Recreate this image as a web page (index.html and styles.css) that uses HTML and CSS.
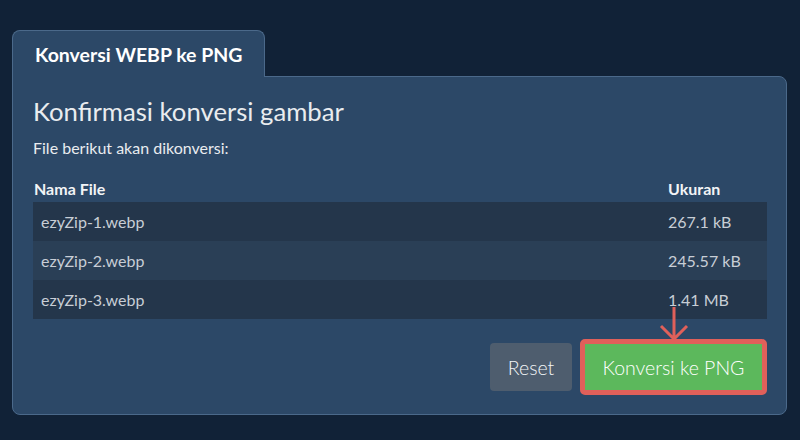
FILE: index.html
```html
<!DOCTYPE html>
<html lang="id">
<head>
<meta charset="utf-8">
<title>Konversi WEBP ke PNG</title>
<link rel="stylesheet" href="styles.css">
</head>
<body>
<div class="page">
  <div class="tabs">
    <div class="tab">Konversi WEBP ke PNG</div>
  </div>
  <div class="panel">
    <h1 class="title">Konfirmasi konversi gambar</h1>
    <p class="lead">File berikut akan dikonversi:</p>
    <div class="table">
      <div class="row head">
        <div class="cell name">Nama File</div>
        <div class="cell size">Ukuran</div>
      </div>
      <div class="row odd">
        <div class="cell name">ezyZip-1.webp</div>
        <div class="cell size">267.1 kB</div>
      </div>
      <div class="row even">
        <div class="cell name">ezyZip-2.webp</div>
        <div class="cell size">245.57 kB</div>
      </div>
      <div class="row odd">
        <div class="cell name">ezyZip-3.webp</div>
        <div class="cell size">1.41 MB</div>
      </div>
    </div>
    <div class="actions">
      <button class="btn reset">Reset</button>
      <div class="highlight">
        <svg class="arrow" width="30" height="34" viewBox="0 0 30 34" aria-hidden="true">
          <path d="M15 0 V32 M2 19 L15 32 L28 19" fill="none" stroke="#e0605a" stroke-width="3" stroke-linecap="butt" stroke-linejoin="miter"/>
        </svg>
        <button class="btn convert">Konversi ke PNG</button>
      </div>
    </div>
  </div>
</div>
</body>
</html>
```

FILE: styles.css
```css
* { box-sizing: border-box; }

html, body {
  margin: 0;
  padding: 0;
  background: #112237;
  width: 800px;
  height: 440px;
  overflow: hidden;
  font-family: Lato, "Open Sans", "Liberation Sans", sans-serif;
}

.page {
  padding: 30px 13px 0 12px;
}

.tabs {
  display: flex;
}

.tab {
  width: 253px;
  height: 47px;
  margin-bottom: -1px;
  background: #2c4867;
  border: 1px solid #4b698a;
  border-bottom: none;
  border-radius: 8px 8px 0 0;
  color: #ffffff;
  font-weight: 700;
  font-size: 19.5px;
  line-height: 24px;
  padding: 12px 0 0 22px;
  position: relative;
  z-index: 1;
}

.panel {
  background: #2c4867;
  border: 1px solid #4b698a;
  border-radius: 0 8px 8px 8px;
  padding: 19px 19px 19px 20px;
  height: 339px;
}

.title {
  margin: 0;
  font-weight: 400;
  font-size: 25.7px;
  line-height: 31px;
  color: #e9ecef;
}

.lead {
  margin: 11px 0 0;
  font-size: 16px;
  line-height: 19px;
  color: #e9ecef;
}

.table {
  margin-top: 22px;
  display: flex;
  flex-direction: column;
}

.row {
  display: flex;
}

.row.head {
  height: 23px;
  color: #f2f4f6;
  font-weight: 700;
  font-size: 16px;
  line-height: 19px;
}

.row.head .name { padding-left: 1px; }

.row.odd, .row.even {
  height: 39px;
  line-height: 39px;
  font-size: 16px;
  color: #c8ced6;
}

.row.odd { background: #24364b; }
.row.even { background: #2a3f56; }

.cell.name {
  flex: 1;
  padding-left: 8px;
}

.cell.size {
  width: 99px;
}

.actions {
  margin-top: 20px;
  display: flex;
  justify-content: flex-end;
  align-items: center;
  gap: 8px;
}

.btn {
  font-family: Lato, "Open Sans", "Liberation Sans", sans-serif;
  font-size: 19.5px;
  font-weight: 300;
  border: none;
  color: #f3f5f7;
  cursor: pointer;
}

.reset {
  width: 82px;
  height: 48px;
  background: #4e5d6e;
  border-radius: 4px;
  padding: 0;
}

.highlight {
  position: relative;
  border: 5px solid #e0605a;
  border-radius: 5px;
  display: flex;
}

.convert {
  width: 177px;
  height: 46px;
  background: #5cb85c;
  padding: 0;
  color: #ffffff;
}

.arrow {
  position: absolute;
  left: 50%;
  margin-left: -15px;
  bottom: 100%;
  margin-bottom: 3px;
}
```
